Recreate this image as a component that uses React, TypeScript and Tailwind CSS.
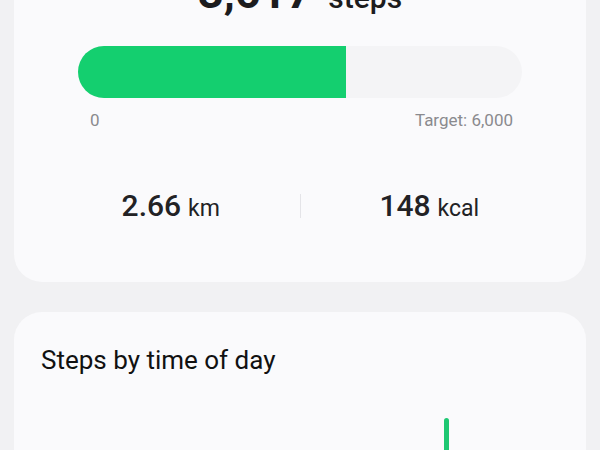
import React from "react";

export default function App() {
  const steps = 3617;
  const target = 6000;
  const pct = (steps / target) * 100;
  return (
    <div
      className="h-[450px] w-[600px] overflow-hidden bg-[#f1f1f3] px-[14px]"
      style={{ fontFamily: "Roboto, 'Noto Sans', sans-serif" }}
    >
      <div className="-mt-[60px] rounded-b-[28px] bg-[#fafafc] px-[64px] pt-[30px] pb-[61px]">
        <div className="flex items-baseline justify-center gap-[16px] leading-none text-[#1c1c1e]">
          <span className="text-[45px] font-bold">3,617</span>
          <span className="text-[30px] font-medium">steps</span>
        </div>
        <div className="mt-[31px] h-[52px] w-full overflow-hidden rounded-full bg-[#f4f4f6]">
          <div className="h-full bg-[#14cf6f]" style={{ width: `${pct}%` }} />
        </div>
        <div className="mt-[14px] flex justify-between px-[9px] pl-[12px] text-[17px] leading-none text-[#8a8a8e]">
          <span>0</span>
          <span>Target: 6,000</span>
        </div>
        <div className="-mx-[36px] mt-[62px] flex items-center text-[#222225]">
          <div className="flex flex-1 items-baseline justify-center gap-[7px] leading-none">
            <span className="text-[30px] font-medium">2.66</span>
            <span className="text-[23px]">km</span>
          </div>
          <div className="h-[24px] w-px bg-[#e4e4e8]" />
          <div className="flex flex-1 items-baseline justify-center gap-[7px] leading-none">
            <span className="text-[30px] font-medium">148</span>
            <span className="text-[23px]">kcal</span>
          </div>
        </div>
      </div>
      <div className="mt-[30px] h-[200px] rounded-[28px] bg-[#fafafc] px-[27px] pt-[35px]">
        <div className="text-[26px] leading-none text-[#111]">Steps by time of day</div>
        <div className="relative mt-[45px] h-[120px]">
          <div className="absolute left-[403px] top-0 h-full w-[5px] rounded-t-full bg-[#1ec873]" />
        </div>
      </div>
    </div>
  );
}
